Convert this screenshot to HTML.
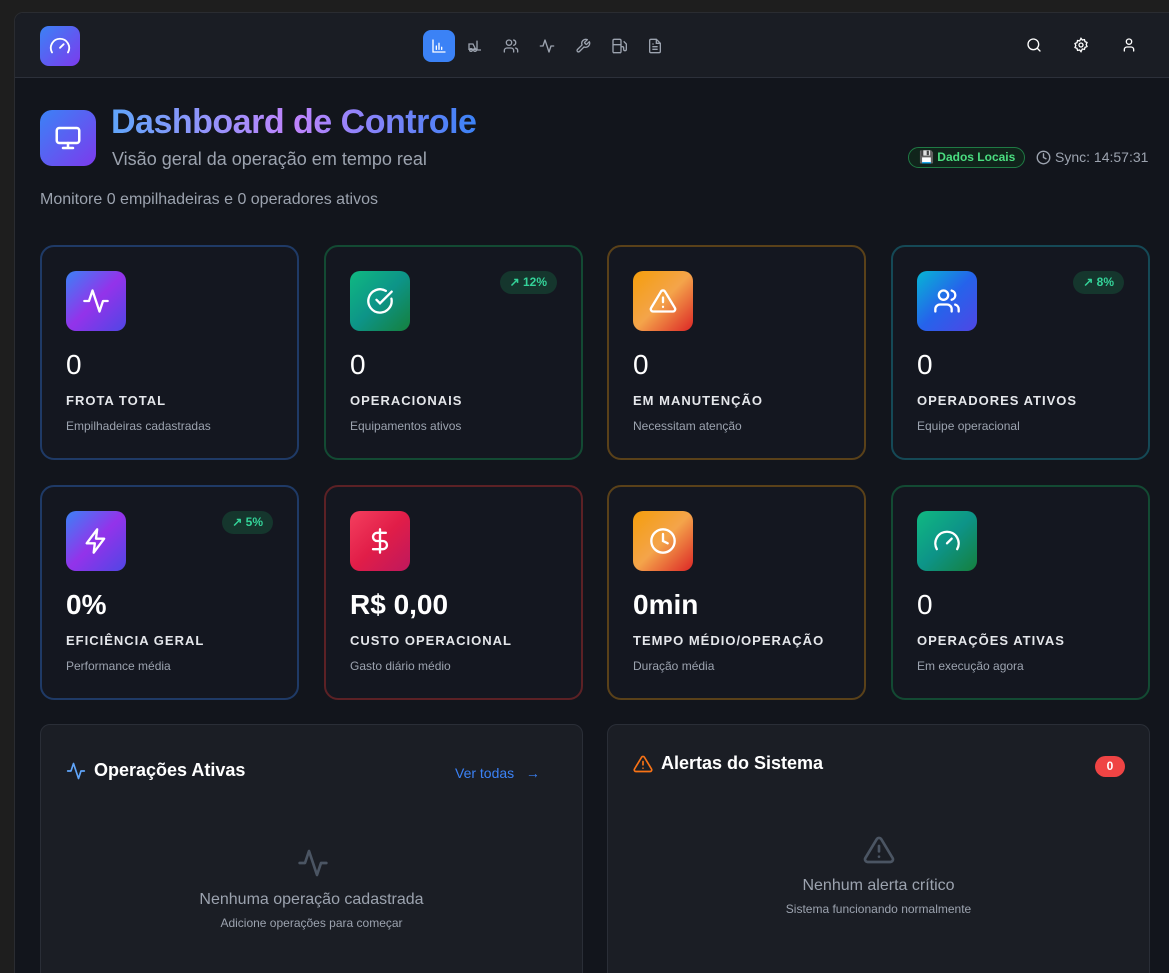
<!DOCTYPE html>
<html><head><meta charset="utf-8"><style>
*{box-sizing:border-box;margin:0;padding:0}
body{width:1169px;height:946px;overflow:hidden;background:#1e1e1e;font-family:"Liberation Sans",sans-serif;position:relative}
.win{position:absolute;left:15px;top:13px;width:1170px;height:960px;background:#12151c;outline:1px solid #2a2c31;border-radius:8px 0 0 0;overflow:hidden}
.hdr{position:absolute;left:0;top:0;right:0;height:65px;background:#1a1d24;border-bottom:1px solid #2c303a}
.logo{position:absolute;left:25px;top:13px;width:40px;height:40px;border-radius:9px;background:linear-gradient(135deg,#3b82f6,#7c3aed);display:flex;align-items:center;justify-content:center}
.nav{position:absolute;left:408px;top:17px;display:flex;gap:4px}
.nav div{width:32px;height:32px;border-radius:8px;display:flex;align-items:center;justify-content:center}
.nav .on{background:#3b82f6}
.ric{position:absolute;top:24px}
svg{display:block}
.abs{position:absolute}
.card{position:absolute;width:259px;height:215px;border:2px solid;border-radius:14px;background:#141720}
.ib{position:absolute;left:24px;top:24px;width:60px;height:60px;border-radius:10px;display:flex;align-items:center;justify-content:center}
.num{position:absolute;left:24px;top:102px;font-size:28px;color:#fff}
.lab{position:absolute;left:24px;top:146px;font-size:13px;letter-spacing:1px;color:#e5e7eb;font-weight:bold}
.sub{position:absolute;left:24px;top:172px;font-size:12px;color:#9ca3af}
.badge{position:absolute;right:24px;top:24px;height:23px;padding:0 10px;border-radius:12px;background:#15362d;color:#34d399;font-size:12px;font-weight:bold;line-height:23px}
.pan{position:absolute;top:711px;width:543px;height:260px;background:#1b1e25;border:1px solid #2a2e37;border-radius:10px}
</style></head><body>
<div class="win">
 <div class="hdr">
  <div class="logo"><svg width="22" height="22" viewBox="0 0 24 24" fill="none" stroke="#fff" stroke-width="2" stroke-linecap="round"><path d="M12 14l4-4"/><path d="M3.3 19a10 10 0 1 1 17.4 0"/></svg></div>
  <div class="nav">
   <div class="on"><svg width="16" height="16" viewBox="0 0 24 24" fill="none" stroke="#fff" stroke-width="2" stroke-linecap="round"><path d="M3 3v18h18"/><path d="M8 17v-5M12 17V8M16 17v-3"/></svg></div>
   <div><svg width="16" height="16" viewBox="0 0 24 24" fill="none" stroke="#9ca3af" stroke-width="2"><path d="M3 17V9h6l3 6v2H3z"/><circle cx="6" cy="18" r="2"/><circle cx="12" cy="18" r="2"/><path d="M15 4v14h6"/></svg></div>
   <div><svg width="16" height="16" viewBox="0 0 24 24" fill="none" stroke="#9ca3af" stroke-width="2" stroke-linecap="round"><circle cx="9" cy="7" r="4"/><path d="M2 21v-2a4 4 0 0 1 4-4h6a4 4 0 0 1 4 4v2M16 3.1a4 4 0 0 1 0 7.8M22 21v-2a4 4 0 0 0-3-3.9"/></svg></div>
   <div><svg width="16" height="16" viewBox="0 0 24 24" fill="none" stroke="#9ca3af" stroke-width="2" stroke-linecap="round" stroke-linejoin="round"><path d="M22 12h-4l-3 9L9 3l-3 9H2"/></svg></div>
   <div><svg width="16" height="16" viewBox="0 0 24 24" fill="none" stroke="#9ca3af" stroke-width="2" stroke-linejoin="round"><path d="M14.7 6.3a1 1 0 0 0 0 1.4l1.6 1.6a1 1 0 0 0 1.4 0l3.8-3.8a6 6 0 0 1-7.9 7.9l-6.9 6.9a2.1 2.1 0 0 1-3-3l6.9-6.9a6 6 0 0 1 7.9-7.9z"/></svg></div>
   <div><svg width="16" height="16" viewBox="0 0 24 24" fill="none" stroke="#9ca3af" stroke-width="2"><path d="M3 22V4a2 2 0 0 1 2-2h8a2 2 0 0 1 2 2v18M3 22h12M3 10h12M15 13h2a2 2 0 0 1 2 2v2a2 2 0 0 0 4 0V9l-4-4"/></svg></div>
   <div><svg width="16" height="16" viewBox="0 0 24 24" fill="none" stroke="#9ca3af" stroke-width="2"><path d="M14 2H6a2 2 0 0 0-2 2v16a2 2 0 0 0 2 2h12a2 2 0 0 0 2-2V8z"/><path d="M14 2v6h6M8 13h8M8 17h8M8 9h2"/></svg></div>
  </div>
  <div class="ric" style="left:1011px"><svg width="16" height="16" viewBox="0 0 24 24" fill="none" stroke="#fff" stroke-width="2" stroke-linecap="round"><circle cx="11" cy="11" r="8"/><path d="M21 21l-4.3-4.3"/></svg></div>
  <div class="ric" style="left:1058px"><svg width="16" height="16" viewBox="0 0 24 24" fill="none" stroke="#fff" stroke-width="2"><circle cx="12" cy="12" r="3"/><path d="M12 2l2 2.5 3.2-.6.8 3.1 3 1.3-1.2 3 1.2 2.9-3 1.3-.8 3.1-3.2-.6L12 22l-2-2.5-3.2.6-.8-3.1-3-1.3 1.2-2.9L3 9.7l3-1.3.8-3.1 3.2.6z"/></svg></div>
  <div class="ric" style="left:1106px"><svg width="16" height="16" viewBox="0 0 24 24" fill="none" stroke="#fff" stroke-width="2" stroke-linecap="round"><circle cx="12" cy="7" r="4"/><path d="M19 21v-2a4 4 0 0 0-4-4H9a4 4 0 0 0-4 4v2"/></svg></div>
 </div>
 <div class="abs" style="left:25px;top:97px;width:56px;height:56px;border-radius:12px;background:linear-gradient(135deg,#3b82f6,#7c3aed);display:flex;align-items:center;justify-content:center"><svg width="30" height="30" viewBox="0 0 24 24" fill="none" stroke="#fff" stroke-width="2" stroke-linecap="round"><rect x="3" y="4" width="18" height="12" rx="2"/><path d="M12 16v4M8 20h8"/></svg></div>
 <div class="abs" style="left:96px;top:90px;font-size:34px;font-weight:bold;letter-spacing:-0.5px;background:linear-gradient(90deg,#60a5fa,#c084fc 50%,#3b82f6);-webkit-background-clip:text;background-clip:text;color:transparent">Dashboard de Controle</div>
 <div class="abs" style="left:97px;top:136px;font-size:18px;color:#9ca3af">Visão geral da operação em tempo real</div>
 <div class="abs" style="left:25px;top:178px;font-size:16px;color:#9ca3af">Monitore 0 empilhadeiras e 0 operadores ativos</div>
 <div class="abs" style="left:893px;top:134px;height:21px;padding:0 9px 0 10px;border:1px solid #1f7a44;border-radius:11px;background:#10241b;color:#4ade80;font-size:12px;font-weight:bold;line-height:19px">💾 Dados Locais</div>
 <div class="abs" style="left:1021px;top:136px;display:flex;align-items:center;gap:4px;color:#9ca3af;font-size:14px"><svg width="15" height="15" viewBox="0 0 24 24" fill="none" stroke="#9ca3af" stroke-width="2.2" stroke-linecap="round"><circle cx="12" cy="12" r="10"/><path d="M12 6v6l4 2"/></svg>Sync: 14:57:31</div>

 <div class="card" style="left:25px;top:232px;border-color:#1f3a66"><div class="ib" style="background:linear-gradient(135deg,#3b82f6,#9333ea 50%,#4f46e5)"><svg width="28" height="28" viewBox="0 0 24 24" fill="none" stroke="#fff" stroke-width="2" stroke-linecap="round" stroke-linejoin="round"><path d="M22 12h-4l-3 9L9 3l-3 9H2"/></svg></div><div class="num">0</div><div class="lab">FROTA TOTAL</div><div class="sub">Empilhadeiras cadastradas</div></div>
 <div class="card" style="left:309px;top:232px;border-color:#134a33"><div class="ib" style="background:linear-gradient(135deg,#10b981,#0d9488 50%,#15803d)"><svg width="28" height="28" viewBox="0 0 24 24" fill="none" stroke="#fff" stroke-width="2" stroke-linecap="round"><path d="M21.8 10A10 10 0 1 1 17 3.3"/><path d="M9 11l3 3L22 4"/></svg></div><div class="badge">↗ 12%</div><div class="num">0</div><div class="lab">OPERACIONAIS</div><div class="sub">Equipamentos ativos</div></div>
 <div class="card" style="left:592px;top:232px;border-color:#5a4119"><div class="ib" style="background:linear-gradient(135deg,#f59e0b,#f4a44a 50%,#dc2626)"><svg width="28" height="28" viewBox="0 0 24 24" fill="none" stroke="#fff" stroke-width="2" stroke-linecap="round" stroke-linejoin="round"><path d="M10.3 3.9L1.8 18a2 2 0 0 0 1.7 3h17a2 2 0 0 0 1.7-3L13.7 3.9a2 2 0 0 0-3.4 0z"/><path d="M12 9v4M12 17h0"/></svg></div><div class="num">0</div><div class="lab">EM MANUTENÇÃO</div><div class="sub">Necessitam atenção</div></div>
 <div class="card" style="left:876px;top:232px;border-color:#154956"><div class="ib" style="background:linear-gradient(135deg,#06b6d4,#2563eb 50%,#4f46e5)"><svg width="28" height="28" viewBox="0 0 24 24" fill="none" stroke="#fff" stroke-width="2" stroke-linecap="round"><circle cx="9" cy="7" r="4"/><path d="M2 21v-2a4 4 0 0 1 4-4h6a4 4 0 0 1 4 4v2M16 3.1a4 4 0 0 1 0 7.8M22 21v-2a4 4 0 0 0-3-3.9"/></svg></div><div class="badge">↗ 8%</div><div class="num">0</div><div class="lab">OPERADORES ATIVOS</div><div class="sub">Equipe operacional</div></div>

 <div class="card" style="left:25px;top:472px;border-color:#1f3a66"><div class="ib" style="background:linear-gradient(135deg,#3b82f6,#9333ea 50%,#4f46e5)"><svg width="28" height="28" viewBox="0 0 24 24" fill="none" stroke="#fff" stroke-width="2" stroke-linejoin="round"><path d="M13 2L4 14h7l-1 8 9-12h-7z"/></svg></div><div class="badge">↗ 5%</div><div class="num" style="font-weight:bold">0%</div><div class="lab">EFICIÊNCIA GERAL</div><div class="sub">Performance média</div></div>
 <div class="card" style="left:309px;top:472px;border-color:#5c2125"><div class="ib" style="background:linear-gradient(135deg,#f43f5e,#e11d48 50%,#be185d)"><svg width="28" height="28" viewBox="0 0 24 24" fill="none" stroke="#fff" stroke-width="2" stroke-linecap="round"><path d="M12 2v20M17 5H9.5a3.5 3.5 0 0 0 0 7h5a3.5 3.5 0 0 1 0 7H6"/></svg></div><div class="num" style="font-weight:bold">R$ 0,00</div><div class="lab">CUSTO OPERACIONAL</div><div class="sub">Gasto diário médio</div></div>
 <div class="card" style="left:592px;top:472px;border-color:#5a4119"><div class="ib" style="background:linear-gradient(135deg,#f59e0b,#f4a44a 50%,#dc2626)"><svg width="28" height="28" viewBox="0 0 24 24" fill="none" stroke="#fff" stroke-width="2" stroke-linecap="round"><circle cx="12" cy="12" r="10"/><path d="M12 6v6l4 2"/></svg></div><div class="num" style="font-weight:bold">0min</div><div class="lab">TEMPO MÉDIO/OPERAÇÃO</div><div class="sub">Duração média</div></div>
 <div class="card" style="left:876px;top:472px;border-color:#134a33"><div class="ib" style="background:linear-gradient(135deg,#10b981,#0d9488 50%,#15803d)"><svg width="28" height="28" viewBox="0 0 24 24" fill="none" stroke="#fff" stroke-width="2" stroke-linecap="round"><path d="M12 14l4-4"/><path d="M3.3 19a10 10 0 1 1 17.4 0"/></svg></div><div class="num">0</div><div class="lab">OPERAÇÕES ATIVAS</div><div class="sub">Em execução agora</div></div>

 <div class="pan" style="left:25px">
  <div class="abs" style="left:25px;top:35px;display:flex;align-items:center;gap:8px;font-size:18px;font-weight:bold;color:#fff"><svg width="20" height="20" viewBox="0 0 24 24" fill="none" stroke="#60a5fa" stroke-width="2" stroke-linecap="round" stroke-linejoin="round"><path d="M22 12h-4l-3 9L9 3l-3 9H2"/></svg>Operações Ativas</div>
  <div class="abs" style="left:414px;top:40px;font-size:14px;color:#3b82f6">Ver todas &nbsp; →</div>
  <svg class="abs" style="left:256px;top:122px" width="32" height="32" viewBox="0 0 24 24" fill="none" stroke="#4b5563" stroke-width="2" stroke-linecap="round" stroke-linejoin="round"><path d="M22 12h-4l-3 9L9 3l-3 9H2"/></svg>
  <div class="abs" style="left:0;width:100%;text-align:center;top:166px;font-size:16px;color:#9ca3af">Nenhuma operação cadastrada</div>
  <div class="abs" style="left:0;width:100%;text-align:center;top:191px;font-size:12px;color:#9ca3af">Adicione operações para começar</div>
 </div>
 <div class="pan" style="left:592px">
  <div class="abs" style="left:25px;top:28px;display:flex;align-items:center;gap:8px;font-size:18px;font-weight:bold;color:#fff"><svg width="20" height="20" viewBox="0 0 24 24" fill="none" stroke="#f97316" stroke-width="2" stroke-linecap="round" stroke-linejoin="round"><path d="M10.3 3.9L1.8 18a2 2 0 0 0 1.7 3h17a2 2 0 0 0 1.7-3L13.7 3.9a2 2 0 0 0-3.4 0z"/><path d="M12 9v4M12 17h0"/></svg>Alertas do Sistema</div>
  <div class="abs" style="left:487px;top:31px;width:30px;height:21px;border-radius:11px;background:#ef4444;color:#fff;font-size:12px;font-weight:bold;text-align:center;line-height:21px">0</div>
  <svg class="abs" style="left:255px;top:109px" width="32" height="32" viewBox="0 0 24 24" fill="none" stroke="#4b5563" stroke-width="2" stroke-linecap="round" stroke-linejoin="round"><path d="M10.3 3.9L1.8 18a2 2 0 0 0 1.7 3h17a2 2 0 0 0 1.7-3L13.7 3.9a2 2 0 0 0-3.4 0z"/><path d="M12 9v4M12 17h0"/></svg>
  <div class="abs" style="left:0;width:100%;text-align:center;top:152px;font-size:16px;color:#9ca3af">Nenhum alerta crítico</div>
  <div class="abs" style="left:0;width:100%;text-align:center;top:177px;font-size:12px;color:#9ca3af">Sistema funcionando normalmente</div>
 </div>
</div>
</body></html>
